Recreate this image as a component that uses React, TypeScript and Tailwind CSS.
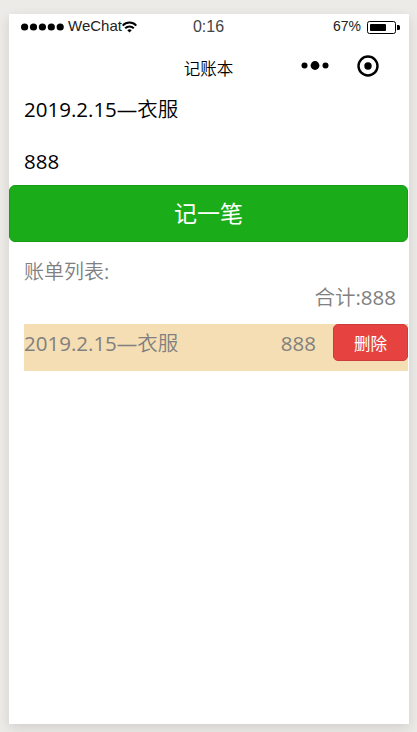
import { useState } from 'react';

type Bill = {
  id: number;
  name: string;
  amount: number;
};

export default function App() {
  const [name, setName] = useState('2019.2.15—衣服');
  const [amount, setAmount] = useState('888');
  const [bills, setBills] = useState<Bill[]>([
    { id: 1, name: '2019.2.15—衣服', amount: 888 },
  ]);

  const total = bills.reduce((sum, bill) => sum + bill.amount, 0);

  // 添加一笔
  const addBill = () => {
    if (!name || !amount) return;
    setBills((prev) => [...prev, { id: Date.now(), name, amount: Number(amount) }]);
  };

  // 删除
  const removeBill = (id: number) => {
    setBills((prev) => prev.filter((bill) => bill.id !== id));
  };

  return (
    <div className="h-[732px] w-[417px] overflow-hidden bg-[#ecebe7] pt-[14px] pl-[9px] font-['Noto_Sans','Noto_Sans_CJK_SC',sans-serif]">
      <div className="flex h-[710px] w-[400px] flex-col bg-white shadow-[0_4px_12px_rgba(0,0,0,0.12)]">
        {/* 状态栏 */}
        <div className="grid h-[26px] grid-cols-3 items-center pr-[9px] pl-3 font-['Liberation_Sans',sans-serif]">
          <div className="flex items-center">
            <svg className="h-2 w-[43px] shrink-0" viewBox="0 0 43 8">
              {[3.6, 12.5, 21.4, 30.3, 39.2].map((cx) => (
                <circle key={cx} cx={cx} cy="4" r="3.6" />
              ))}
            </svg>
            <span className="mb-0.5 ml-1 text-[15px] leading-[22px] text-[#222]">WeChat</span>
            <svg className="h-3 w-[15px] shrink-0" viewBox="0 0 15 12" fill="none" stroke="#000" strokeWidth="2">
              <path d="M0.7 4.6C4.5 0.6 10.5 0.6 14.3 4.6" />
              <path d="M3.2 7.3C5.6 4.8 9.4 4.8 11.8 7.3" />
              <path d="M7.5 11.4L5.3 9.2C6.6 8 8.4 8 9.7 9.2Z" fill="#000" stroke="none" />
            </svg>
          </div>
          <div className="pr-1 text-center text-base text-[#444]">0:16</div>
          <div className="flex items-center justify-end">
            <span className="mb-0.5 text-[14px] leading-5 text-[#222]">67%</span>
            <svg className="ml-1.5 h-[13px] w-[33px]" viewBox="0 0 33 13">
              <rect x="0.5" y="0.5" width="28" height="12" rx="2" fill="none" stroke="#000" />
              <rect x="3" y="3" width="16" height="7" rx="1" />
              <path d="M30 4h1.5q1.5 0 1.5 1.5v2q0 1.5-1.5 1.5H30z" />
            </svg>
          </div>
        </div>

        {/* 导航栏 */}
        <div className="grid h-[48px] grid-cols-3 items-center pt-[3px]">
          <div />
          <h1 className="pt-1.5 pr-px text-center font-['Noto_Sans_CJK_SC_DemiLight','Noto_Sans_CJK_SC',sans-serif] text-[16.5px] text-black">记账本</h1>
          <div className="flex items-center justify-end pr-[30px]">
            <svg className="h-[9px] w-7" viewBox="0 0 28 9">
              <circle cx="3.5" cy="4.5" r="3" />
              <circle cx="14" cy="4.5" r="4.4" />
              <circle cx="24.5" cy="4.5" r="3" />
            </svg>
            <svg className="ml-7 h-[22px] w-[22px]" viewBox="0 0 22 22">
              <circle cx="11" cy="11" r="9.5" fill="none" stroke="#000" strokeWidth="2.4" />
              <circle cx="11" cy="11" r="3.7" />
            </svg>
          </div>
        </div>

        {/* 主内容 */}
        <main className="flex flex-col pr-px font-['Open_Sans','Noto_Sans_CJK_SC_DemiLight','Noto_Sans_CJK_SC',sans-serif] text-[20.5px] text-[#808080]">
          <input
            className="h-10 pl-[15px] text-black outline-none"
            value={name}
            onChange={(e) => setName(e.target.value)}
          />
          <input
            className="mt-3 h-[42px] pl-[15px] text-black outline-none"
            value={amount}
            onChange={(e) => setAmount(e.target.value)}
          />
          <button
            onClick={addBill}
            className="mt-[3px] h-[57px] rounded-[6px] border border-[#179b16] bg-[#1aad19] pb-0.5 font-['Noto_Sans_CJK_SC',sans-serif] text-[23px] text-white"
          >
            记一笔
          </button>

          <div className="mt-[17px] pl-[15px] text-[20px] leading-[26px]">账单列表:</div>
          <div className="-mt-px pr-3 text-right leading-[26px]">合计:{total}</div>

          <ul className="mt-[14px] flex flex-col pl-[15px]">
            {bills.map((bill) => (
              <li key={bill.id} className="flex h-[47px] items-start bg-[#f5deb3]">
                <span className="flex-1 leading-[38px]">{bill.name}</span>
                <span className="mr-[17px] leading-[38px]">{bill.amount}</span>
                <button
                  onClick={() => removeBill(bill.id)}
                  className="h-[37px] w-[75px] rounded-[5px] border border-[#ce3c39] bg-[#e64340] pt-0.5 font-['Noto_Sans_CJK_SC',sans-serif] text-[16.5px] text-white"
                >
                  删除
                </button>
              </li>
            ))}
          </ul>
        </main>
      </div>
    </div>
  );
}
